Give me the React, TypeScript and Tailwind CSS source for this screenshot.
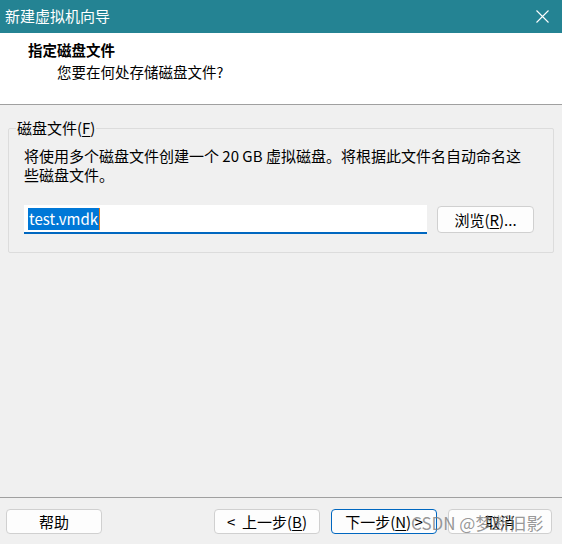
const font = { fontFamily: '"Noto Sans CJK SC", "Noto Sans", sans-serif' };

function Key({ k }: { k: string }) {
  return <span className="underline underline-offset-2">{k}</span>;
}

function WinButton({
  children,
  className = '',
  primary = false,
}: {
  children: React.ReactNode;
  className?: string;
  primary?: boolean;
}) {
  return (
    <button
      className={
        'flex h-[25px] items-center justify-center rounded-[4px] border bg-[#fdfdfd] text-[15px] leading-none text-black ' +
        (primary ? 'border-[#0067c0] ' : 'border-[#d0d0d0] ') +
        className
      }
    >
      {children}
    </button>
  );
}

export default function App() {
  return (
    <div className="relative flex h-[544px] w-[562px] flex-col overflow-hidden bg-[#f0f0f0]" style={font}>
      {/* 标题栏 */}
      <div className="flex h-[33px] shrink-0 items-center justify-between bg-[#248393] pl-[5px] pr-[13px] text-[15px] text-white">
        <span>新建虚拟机向导</span>
        <svg width="13" height="13" viewBox="0 0 13 13" aria-hidden="true">
          <path d="M0.5 0.5 L12.5 12.5 M12.5 0.5 L0.5 12.5" stroke="white" strokeWidth="1.1" fill="none" />
        </svg>
      </div>

      {/* 页头 */}
      <div className="h-[72px] shrink-0 border-b border-[#a0a0a0] bg-white pl-[28px] pt-[6px] text-black">
        <div className="text-[14.5px] font-bold leading-[22px]">指定磁盘文件</div>
        <div className="pl-[29px] text-[14.5px] leading-[22px]">您要在何处存储磁盘文件?</div>
      </div>

      {/* 内容 */}
      <div className="flex-1 px-[8px] pt-[13px]">
        <fieldset className="rounded-[2px] border border-[#dcdcdc] px-0 pb-[18px]">
          <legend className="ml-[7px] px-[1px] text-[15px] leading-5 text-black">
            磁盘文件(<Key k="F" />)
          </legend>
          <div className="pl-[15px] pr-[17px]">
            <p className="mt-[8px] text-[15px] leading-[19px] text-black">
              将使用多个磁盘文件创建一个 20 GB 虚拟磁盘。将根据此文件名自动命名这
              <br />
              些磁盘文件。
            </p>
            <div className="mt-[21px] flex items-center gap-[10px]">
              <div className="flex h-[29px] w-[403px] items-center border-b-2 border-[#0067c0] bg-white pl-[4px]">
                <span className="bg-[#0078d7] px-[1px] text-[15px] leading-[22px] text-white">test.vmdk</span>
                <span className="h-[22px] w-px bg-[#e87b14]" />
              </div>
              <WinButton className="h-[27px] w-[97px]">
                浏览(<Key k="R" />)...
              </WinButton>
            </div>
          </div>
        </fieldset>
      </div>

      {/* 底部按钮 */}
      <div className="flex h-[47px] shrink-0 items-start border-t border-[#a0a0a0] pl-[6px] pr-[10px] pt-[11px]">
        <WinButton className="w-[96px]">帮助</WinButton>
        <div className="ml-auto flex gap-[11px]">
          <WinButton className="w-[106px]">
            &lt;&nbsp; 上一步(<Key k="B" />)
          </WinButton>
          <WinButton className="w-[106px]" primary>
            下一步(<Key k="N" />) &gt;
          </WinButton>
          <WinButton className="w-[104px]">取消</WinButton>
        </div>
      </div>

      {/* 水印 */}
      <div className="pointer-events-none absolute left-[411px] top-[511px] text-[17px] leading-6 text-[#7d7d7d]/80">
        CSDN @梦断旧影
      </div>
    </div>
  );
}
